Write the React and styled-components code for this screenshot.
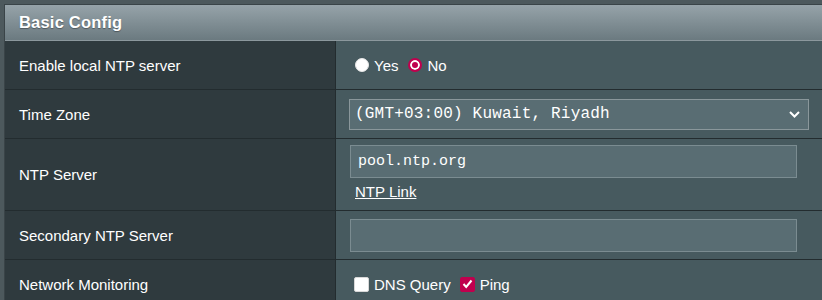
import React from "react";
import styled, { createGlobalStyle } from "styled-components";

const GlobalStyle = createGlobalStyle`
  html, body {
    margin: 0;
    padding: 0;
    background: #4d595d;
    overflow: hidden;
  }
  body {
    font-family: "Liberation Sans", Arial, sans-serif;
    color: #ffffff;
  }
`;

const Page = styled.div`
  padding: 4px 0 0 4px;
  width: 840px;
`;

const Table = styled.div`
  border-top: 1px solid #3a4448;
  border-left: 1px solid #3a4448;
`;

const Header = styled.div`
  height: 35px;
  display: flex;
  align-items: center;
  padding-left: 14px;
  background: linear-gradient(to bottom, #96a3a9 0%, #6b7a80 100%);
  border-bottom: 1px solid #8c989d;
  font-size: 16.5px;
  font-weight: bold;
  letter-spacing: 0.2px;
  text-shadow: 0 1px 1px rgba(0, 0, 0, 0.35);
`;

const Row = styled.div`
  display: grid;
  grid-template-columns: 331px 1fr;
  min-height: ${(p) => p.height || 48}px;
  border-bottom: 1px solid #232c2f;
`;

const Label = styled.div`
  display: flex;
  align-items: center;
  padding-left: 14px;
  background: #2f3a3e;
  border-right: 1px solid #232c2f;
  font-size: 15px;
`;

const Value = styled.div`
  background: #475a5f;
  display: flex;
  flex-direction: ${(p) => (p.column ? "column" : "row")};
  align-items: ${(p) => (p.column ? "flex-start" : "center")};
  padding: ${(p) => p.pad || "0 0 0 18px"};
  font-size: 15px;
`;

const Choice = styled.label`
  display: inline-flex;
  align-items: center;
  margin-right: ${(p) => p.gap || 6}px;
`;

const Radio = styled.span`
  width: 14px;
  height: 14px;
  border-radius: 50%;
  box-sizing: border-box;
  margin-right: 5px;
  background: ${(p) => (p.checked ? "#c0004e" : "#ffffff")};
  border: ${(p) => (p.checked ? "2px solid #c0004e" : "1px solid #e6e6e6")};
  box-shadow: ${(p) => (p.checked ? "inset 0 0 0 2px #ffffff" : "none")};
`;

const Check = styled.span`
  width: 15px;
  height: 15px;
  box-sizing: border-box;
  border-radius: 2px;
  margin-right: 5px;
  display: inline-flex;
  align-items: center;
  justify-content: center;
  background: ${(p) => (p.checked ? "#c0004e" : "#ffffff")};
  border: 1px solid ${(p) => (p.checked ? "#c0004e" : "#d8d8d8")};
`;

const Select = styled.div`
  width: 460px;
  height: 31px;
  box-sizing: border-box;
  margin-left: -5px;
  padding: 0 8px 0 5px;
  display: flex;
  align-items: center;
  justify-content: space-between;
  background: #596d73;
  border: 1px solid #8a979b;
  font-family: "Liberation Mono", "DejaVu Sans Mono", monospace;
  font-size: 16px;
  letter-spacing: 0.2px;
`;

const Input = styled.div`
  width: 447px;
  height: 33px;
  box-sizing: border-box;
  padding: 0 7px;
  display: flex;
  align-items: center;
  background: #596d73;
  border: 1px solid #7b8c91;
  font-family: "Liberation Mono", "DejaVu Sans Mono", monospace;
  font-size: 15px;
`;

const Link = styled.a`
  color: #ffffff;
  text-decoration: underline;
  font-size: 15px;
  margin: 5px 0 0 5px;
`;

const Chevron = () => (
  <svg width="11" height="7" viewBox="0 0 11 7">
    <polyline points="1,1 5.5,5.5 10,1" fill="none" stroke="#ffffff" strokeWidth="2" />
  </svg>
);

const Tick = () => (
  <svg width="11" height="10" viewBox="0 0 11 10">
    <polyline points="1.5,5 4.2,8 9.5,1.5" fill="none" stroke="#ffffff" strokeWidth="2" />
  </svg>
);

export default function App() {
  return (
    <>
      <GlobalStyle />
      <Page>
        <Table>
          <Header>Basic Config</Header>
          <Row>
            <Label>Enable local NTP server</Label>
            <Value pad="0 0 0 19px">
              <Choice gap={10}>
                <Radio />
                Yes
              </Choice>
              <Choice>
                <Radio checked />
                No
              </Choice>
            </Value>
          </Row>
          <Row>
            <Label>Time Zone</Label>
            <Value>
              <Select>
                <span>(GMT+03:00) Kuwait, Riyadh</span>
                <Chevron />
              </Select>
            </Value>
          </Row>
          <Row height={71}>
            <Label>NTP Server</Label>
            <Value column pad="6px 0 0 14px">
              <Input>pool.ntp.org</Input>
              <Link href="#">NTP Link</Link>
            </Value>
          </Row>
          <Row>
            <Label>Secondary NTP Server</Label>
            <Value pad="0 0 0 14px">
              <Input />
            </Value>
          </Row>
          <Row>
            <Label>Network Monitoring</Label>
            <Value pad="0 0 0 18px">
              <Choice gap={9}>
                <Check />
                DNS Query
              </Choice>
              <Choice>
                <Check checked>
                  <Tick />
                </Check>
                Ping
              </Choice>
            </Value>
          </Row>
        </Table>
      </Page>
    </>
  );
}
